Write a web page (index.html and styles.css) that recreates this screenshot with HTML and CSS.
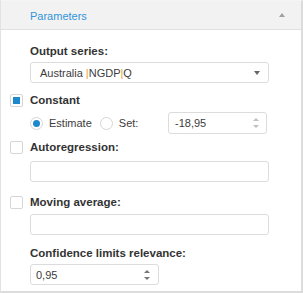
FILE: index.html
```html
<!DOCTYPE html>
<html>
<head>
<meta charset="utf-8">
<link rel="stylesheet" href="styles.css">
</head>
<body>
<div class="panel">
  <div class="header">
    <span class="title">Parameters</span>
    <span class="collapse"></span>
  </div>
  <div class="content">
    <div class="label">Output series:</div>
    <div class="box select">
      <span class="val">Australia <span class="sep">|</span>NGDP<span class="sep">|</span>Q</span>
      <span class="caret-down"></span>
    </div>

    <div class="check-row r-constant">
      <span class="cb checked"></span>
      <span class="cb-label">Constant</span>
    </div>
    <div class="radio-row">
      <span class="rb on"></span><span class="rb-label">Estimate</span>
      <span class="rb"></span><span class="rb-label set">Set:</span>
      <div class="box num">
        <span class="val">-18,95</span>
        <span class="spin"><span class="up"></span><span class="down"></span></span>
      </div>
    </div>

    <div class="check-row r-auto">
      <span class="cb"></span>
      <span class="cb-label">Autoregression:</span>
    </div>
    <div class="box text i-auto"></div>

    <div class="check-row r-ma">
      <span class="cb"></span>
      <span class="cb-label">Moving average:</span>
    </div>
    <div class="box text i-ma"></div>

    <div class="label l-conf">Confidence limits relevance:</div>
    <div class="box conf">
      <span class="val">0,95</span>
      <span class="spin dark"><span class="up"></span><span class="down"></span></span>
    </div>
  </div>
</div>
</body>
</html>
```

FILE: styles.css
```css
* { box-sizing: border-box; }
html, body { margin: 0; padding: 0; background: #fff; }
body { font-family: "Liberation Sans", Arial, sans-serif; font-size: 11px; color: #3c3c3c; }

.panel {
  width: 303px;
  height: 293px;
  border-left: 1px solid #e2e2e2;
  border-right: 2px solid #dcdcdc;
  border-bottom: 2px solid #dcdcdc;
  border-top: 1px solid #f4f4f4;
}
.header {
  height: 29px;
  background: #f2f2f2;
  border-bottom: 1px solid #e0e0e0;
  display: flex;
  align-items: center;
  padding-left: 29px;
  padding-right: 16px;
}
.title { color: #3294dc; font-size: 11px; flex: 1; padding-top: 1px; }
.collapse {
  width: 0; height: 0;
  border-left: 3px solid transparent;
  border-right: 3px solid transparent;
  border-bottom: 4px solid #a0a0a0;
}
.content { padding: 13px 0 0 9px; }
.label {
  padding-left: 20px;
  height: 16px;
  line-height: 16px;
  font-weight: bold;
  font-size: 11.5px;
  color: #333;
}
.box {
  border: 1px solid #dcdcdc;
  border-radius: 3px;
  background: #fff;
  display: flex;
  align-items: center;
}
.select {
  margin: 3px 0 0 20px;
  width: 239px;
  height: 21px;
  padding: 0 8px 0 9px;
  justify-content: space-between;
}
.sep { color: #e8a030; }
.caret-down {
  width: 0; height: 0;
  border-left: 3px solid transparent;
  border-right: 3px solid transparent;
  border-top: 4px solid #666;
}
.check-row {
  display: flex;
  align-items: center;
  height: 16px;
}
.r-constant { margin-top: 9px; }
.r-auto { margin-top: 5px; }
.r-ma { margin-top: 12px; }
.cb {
  width: 13px; height: 13px;
  border: 1px solid #d6d6d6;
  border-radius: 2px;
  background: #fff;
  display: flex;
  align-items: center;
  justify-content: center;
  margin-right: 7px;
}
.cb.checked::after {
  content: "";
  width: 7px; height: 7px;
  background: #1e88cf;
}
.cb-label { font-weight: bold; font-size: 11.5px; color: #333; }
.radio-row {
  margin-top: 4px;
  padding-left: 20px;
  display: flex;
  align-items: center;
  height: 22px;
}
.rb {
  width: 13px; height: 13px;
  border: 1px solid #d6d6d6;
  border-radius: 50%;
  display: flex;
  align-items: center;
  justify-content: center;
  margin-right: 6px;
}
.rb.on::after {
  content: "";
  width: 7px; height: 7px;
  border-radius: 50%;
  background: #1e88cf;
}
.rb-label { margin-right: 8px; }
.rb-label.set { margin-right: 0; }
.num {
  margin-left: auto;
  margin-right: 34px;
  width: 99px;
  height: 22px;
  padding: 0 7px 0 6px;
  justify-content: space-between;
}
.spin { display: flex; flex-direction: column; gap: 4px; align-items: center; }
.spin .up {
  width: 0; height: 0;
  border-left: 3px solid transparent;
  border-right: 3px solid transparent;
  border-bottom: 3px solid #c0c0c0;
}
.spin .down {
  width: 0; height: 0;
  border-left: 3px solid transparent;
  border-right: 3px solid transparent;
  border-top: 3px solid #c0c0c0;
}
.spin.dark .up { border-bottom-color: #777; }
.spin.dark .down { border-top-color: #777; }
.text { margin-left: 20px; width: 239px; height: 21px; }
.i-auto { margin-top: 6px; }
.i-ma { margin-top: 4px; }
.l-conf { margin-top: 10px; }
.conf {
  margin: 3px 0 0 20px;
  width: 129px;
  height: 21px;
  padding: 0 8px 0 5px;
  justify-content: space-between;
}
```
